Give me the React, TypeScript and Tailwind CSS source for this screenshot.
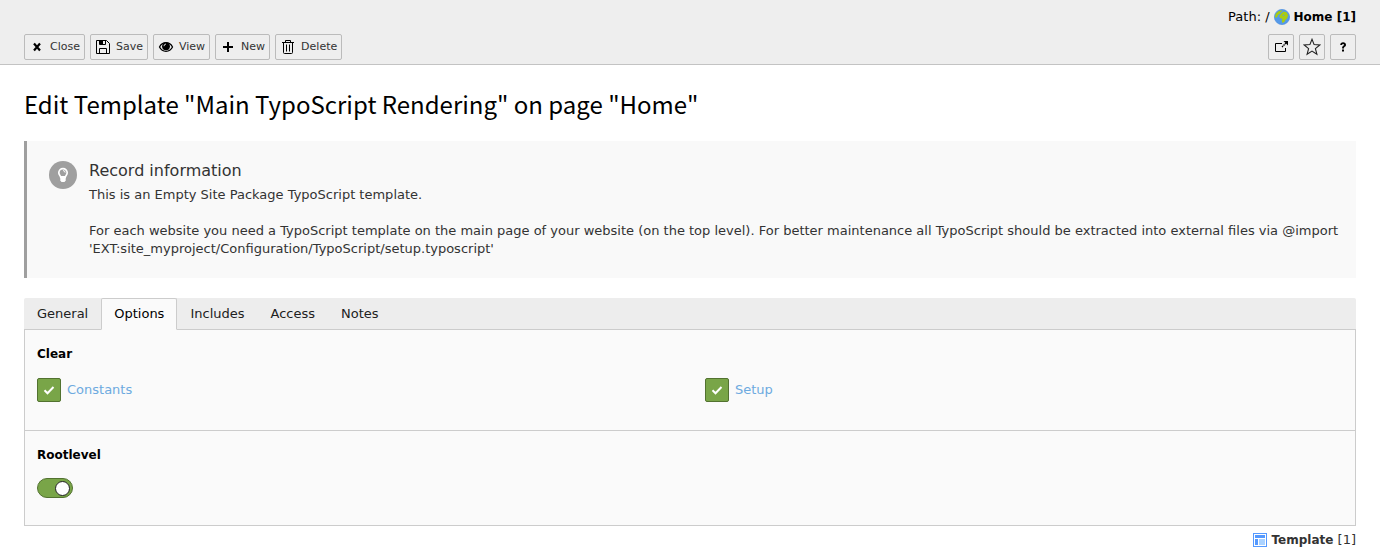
import { useState, type ReactNode } from "react";

function Icon({ children }: { children: ReactNode }) {
  return (
    <svg viewBox="0 0 16 16" className="size-4 shrink-0" aria-hidden="true">
      {children}
    </svg>
  );
}

const CloseIcon = () => (
  <Icon>
    <path d="m5 4.500 6 7M11 4.500l-6 7" fill="none" stroke="#000" strokeWidth="2.200" />
  </Icon>
);

const SaveIcon = () => (
  <Icon>
    <path d="M1.500 1.500h10l3 3v10h-13z" fill="none" stroke="#000" />
    <path d="M4.500 1.500v4h6v-4M4.500 14.500v-5h7v5" fill="none" stroke="#000" />
    <path d="M5 1h3v4.500H5z" />
  </Icon>
);

const ViewIcon = () => (
  <Icon>
    <path d="M1.500 8C3 5 5.200 3.700 8 3.700S13 5 14.500 8C13 11 10.800 12.300 8 12.300S3 11 1.500 8z" fill="none" stroke="#000" strokeWidth="1.300" />
    <circle cx="8" cy="7.300" r="3.900" />
    <path d="M6 7.200A2.200 2.200 0 0 1 8 5" fill="none" stroke="#eee" strokeWidth=".9" />
  </Icon>
);

const PlusIcon = () => (
  <Icon>
    <path d="M7 3h2v4h4v2H9v4H7V9H3V7h4z" />
  </Icon>
);

const TrashIcon = () => (
  <Icon>
    <path d="M2 3.500h12M5.500 3V1.500h5V3M3.500 4v9.500q0 1 1 1h7q1 0 1-1V4M6.500 5.500v7M9.500 5.500v7" fill="none" stroke="#000" />
  </Icon>
);

const OpenIcon = () => (
  <Icon>
    <path d="M9 4.500H2.500v8h10V9" fill="none" stroke="#000" />
    <path d="M10.500 2H15v4.500z" />
    <path d="m9 8 4.500-4.500" stroke="#000" strokeWidth="1.300" strokeDasharray="1.500 .6" />
  </Icon>
);

const StarIcon = () => (
  <svg viewBox="0 0 18 18" className="size-[18px] shrink-0" aria-hidden="true">
    <path d="m9 1.300 2.100 5.300 5.700.4-4.400 3.600 1.500 5.600L9 13.100l-4.900 3.100 1.500-5.600L1.200 7l5.700-.4z" fill="none" stroke="#222" strokeWidth="1.100" />
  </svg>
);

const HelpIcon = () => (
  <Icon>
    <path d="M5.200 6C5.300 4.200 6.400 3.300 8.100 3.300c1.700 0 2.900.9 2.900 2.400 0 1-.5 1.600-1.200 2.100-.6.4-.8.700-.8 1.300v.3H7.100v-.5c0-1 .3-1.600 1.200-2.200.5-.4.7-.6.7-1 0-.5-.4-.8-.9-.8-.6 0-1 .4-1.100 1.100zM7 10.500h2v2H7z" />
  </Icon>
);

const GlobeIcon = () => (
  <Icon>
    <circle cx="8" cy="8" r="7.600" fill="#5599e8" stroke="#4a8fdf" strokeWidth=".7" />
    <path d="M4.500 2.200 8 1.200 8.500 2 6.500 3.300 5.800 5 4 6l-.6 1.800L1.600 9 1 7.300 2 4.500z" fill="#a9cc12" />
    <path d="M7 4.500 9.500 2.500l3 .7 1.900 3.300-.7 1-.5 2-1.700 1.200-1.200 2.300-1.900.9-.6-2.400.5-1.800-2-.4-1-1.800z" fill="#a9cc12" />
    <path d="m8.300 6 1.500-.3.800.9-1.300.5z" fill="#5599e8" />
  </Icon>
);

const TemplateIcon = () => (
  <Icon>
    <path d="M1 1h14v14H1z" fill="#59f" />
    <path d="M2 2h12v12H2z" fill="#fff" />
    <path d="M3 3h10v3H3zM3 7h3v6H3z" fill="#59f" />
    <path d="M7 7h6v6H7z" fill="#acd3ff" />
  </Icon>
);

const BulbIcon = () => (
  <svg viewBox="0 0 28 28" className="size-7 shrink-0" aria-hidden="true">
    <circle cx="14" cy="14" r="14" fill="#9f9f9f" />
    <path d="M11.800 16.500c-.3-1.800-2-2.400-2-4.700a4.200 4.200 0 0 1 8.400 0c0 2.300-1.700 2.900-2 4.700z" fill="none" stroke="#fff" strokeWidth="1.700" />
    <path d="M14 9.600a2 2 0 0 1 2.100 2" fill="none" stroke="#fff" />
    <path d="M11.300 15h5.400v4.500L15.500 21h-3l-1.200-1.500z" fill="#fff" />
  </svg>
);

function ToolButton({ icon, label }: { icon: ReactNode; label: string }) {
  return (
    <button
      type="button"
      className="flex h-[26px] items-center gap-[5px] rounded-[2px] border border-[#bbb] bg-[#eee] px-1 text-[11px] text-[#333] hover:bg-[#ddd]"
    >
      {icon}
      {label}
    </button>
  );
}

function IconButton({ icon, label }: { icon: ReactNode; label: string }) {
  return (
    <button
      type="button"
      aria-label={label}
      className="flex size-[26px] items-center justify-center rounded-[2px] border border-[#bbb] bg-[#eee] hover:bg-[#ddd]"
    >
      {icon}
    </button>
  );
}

function CheckOption({ id, label }: { id: string; label: string }) {
  return (
    <div className="flex items-center gap-1.5">
      <span className="grid size-6">
        <input
          id={id}
          type="checkbox"
          defaultChecked
          className="peer col-start-1 row-start-1 size-6 appearance-none rounded-[2px] border border-[#bbb] bg-white checked:border-[#527230] checked:bg-[#79a548]"
        />
        <svg
          viewBox="0 0 24 24"
          aria-hidden="true"
          className="pointer-events-none invisible col-start-1 row-start-1 size-6 peer-checked:visible"
        >
          <path d="m7.500 12.200 3 3 6-6.200" fill="none" stroke="#fff" strokeWidth="2" />
        </svg>
      </span>
      <label htmlFor={id} className="text-[#6daae0]">
        {label}
      </label>
    </div>
  );
}

const tabs = ["General", "Options", "Includes", "Access", "Notes"];

export default function App() {
  const [active, setActive] = useState("Options");

  return (
    <div className="bg-white font-['Verdana','DejaVu_Sans',sans-serif] text-[13px] leading-[18px] text-black">
      <header className="border-b border-[#c3c3c3] bg-[#eee] px-6 pt-2 pb-1">
        <div className="flex h-[18px] items-center justify-end gap-1">
          <span>Path: /</span>
          <GlobeIcon />
          <strong className="text-[12px]">Home [1]</strong>
        </div>
        <div className="mt-2 flex justify-between">
          <div className="flex gap-[5px]">
            <ToolButton icon={<CloseIcon />} label="Close" />
            <ToolButton icon={<SaveIcon />} label="Save" />
            <ToolButton icon={<ViewIcon />} label="View" />
            <ToolButton icon={<PlusIcon />} label="New" />
            <ToolButton icon={<TrashIcon />} label="Delete" />
          </div>
          <div className="flex gap-[5px]">
            <IconButton icon={<OpenIcon />} label="Open in new window" />
            <IconButton icon={<StarIcon />} label="Create a bookmark" />
            <IconButton icon={<HelpIcon />} label="Help" />
          </div>
        </div>
      </header>

      <main className="px-6 pt-6">
        <h1 className="font-['Noto_Sans_CJK_SC',sans-serif] text-[24px] leading-[30px]">
          Edit Template "Main TypoScript Rendering" on page "Home"
        </h1>

        <section className="mt-[22px] flex gap-3 border-l-[3px] border-[#9f9f9f] bg-[#f9f9f9] py-5 pr-3 pl-[22px] text-[#333]">
          <BulbIcon />
          <div>
            <h2 className="mb-[5px] text-[16px] leading-5">Record information</h2>
            <p>This is an Empty Site Package TypoScript template.</p>
            <p className="mt-[18px]">
              For each website you need a TypoScript template on the main page of your website (on the top
              level). For better maintenance all TypoScript should be extracted into external files via @import
              'EXT:site_myproject/Configuration/TypoScript/setup.typoscript'
            </p>
          </div>
        </section>

        <div role="tablist" className="mt-5 flex rounded-t-[2px] bg-[#ededed]">
          {tabs.map((tab) => (
            <button
              key={tab}
              type="button"
              role="tab"
              aria-selected={tab === active}
              onClick={() => setActive(tab)}
              className={
                tab === active
                  ? "h-8 rounded-t-[2px] border border-[#ccc] border-b-[#fafafa] bg-[#fafafa] px-3"
                  : "h-8 border-b border-[#ccc] px-[13px] text-[#212121]"
              }
            >
              {tab}
            </button>
          ))}
          <div className="grow border-b border-[#ccc]" />
        </div>

        <div role="tabpanel" className="border border-t-0 border-[#ccc] bg-[#fafafa]">
          <fieldset className="border-b border-[#ccc] px-3 pt-[15px] pb-7">
            <legend className="float-left mb-[15px] w-full text-[12px] leading-[18px] font-bold">Clear</legend>
            <div className="clear-both grid grid-cols-2 gap-[30px]">
              <CheckOption id="clear-constants" label="Constants" />
              <CheckOption id="clear-setup" label="Setup" />
            </div>
          </fieldset>
          <div className="px-3 pt-[15px] pb-[27px]">
            <label htmlFor="rootlevel" className="block text-[12px] leading-[18px] font-bold">
              Rootlevel
            </label>
            <input
              id="rootlevel"
              type="checkbox"
              role="switch"
              defaultChecked
              className="mt-[14px] flex h-5 w-9 appearance-none items-center rounded-full border border-[#527230] bg-[#79a548] px-0.5 before:size-[15px] before:rounded-full before:border before:border-[#222] before:bg-white checked:justify-end not-checked:border-[#bbb] not-checked:bg-white"
            />
          </div>
        </div>

        <footer className="mt-[5px] flex items-center justify-end gap-1 text-[#333]">
          <TemplateIcon />
          <span>
            <strong className="text-[12px]">Template</strong> [1]
          </span>
        </footer>
      </main>
    </div>
  );
}
